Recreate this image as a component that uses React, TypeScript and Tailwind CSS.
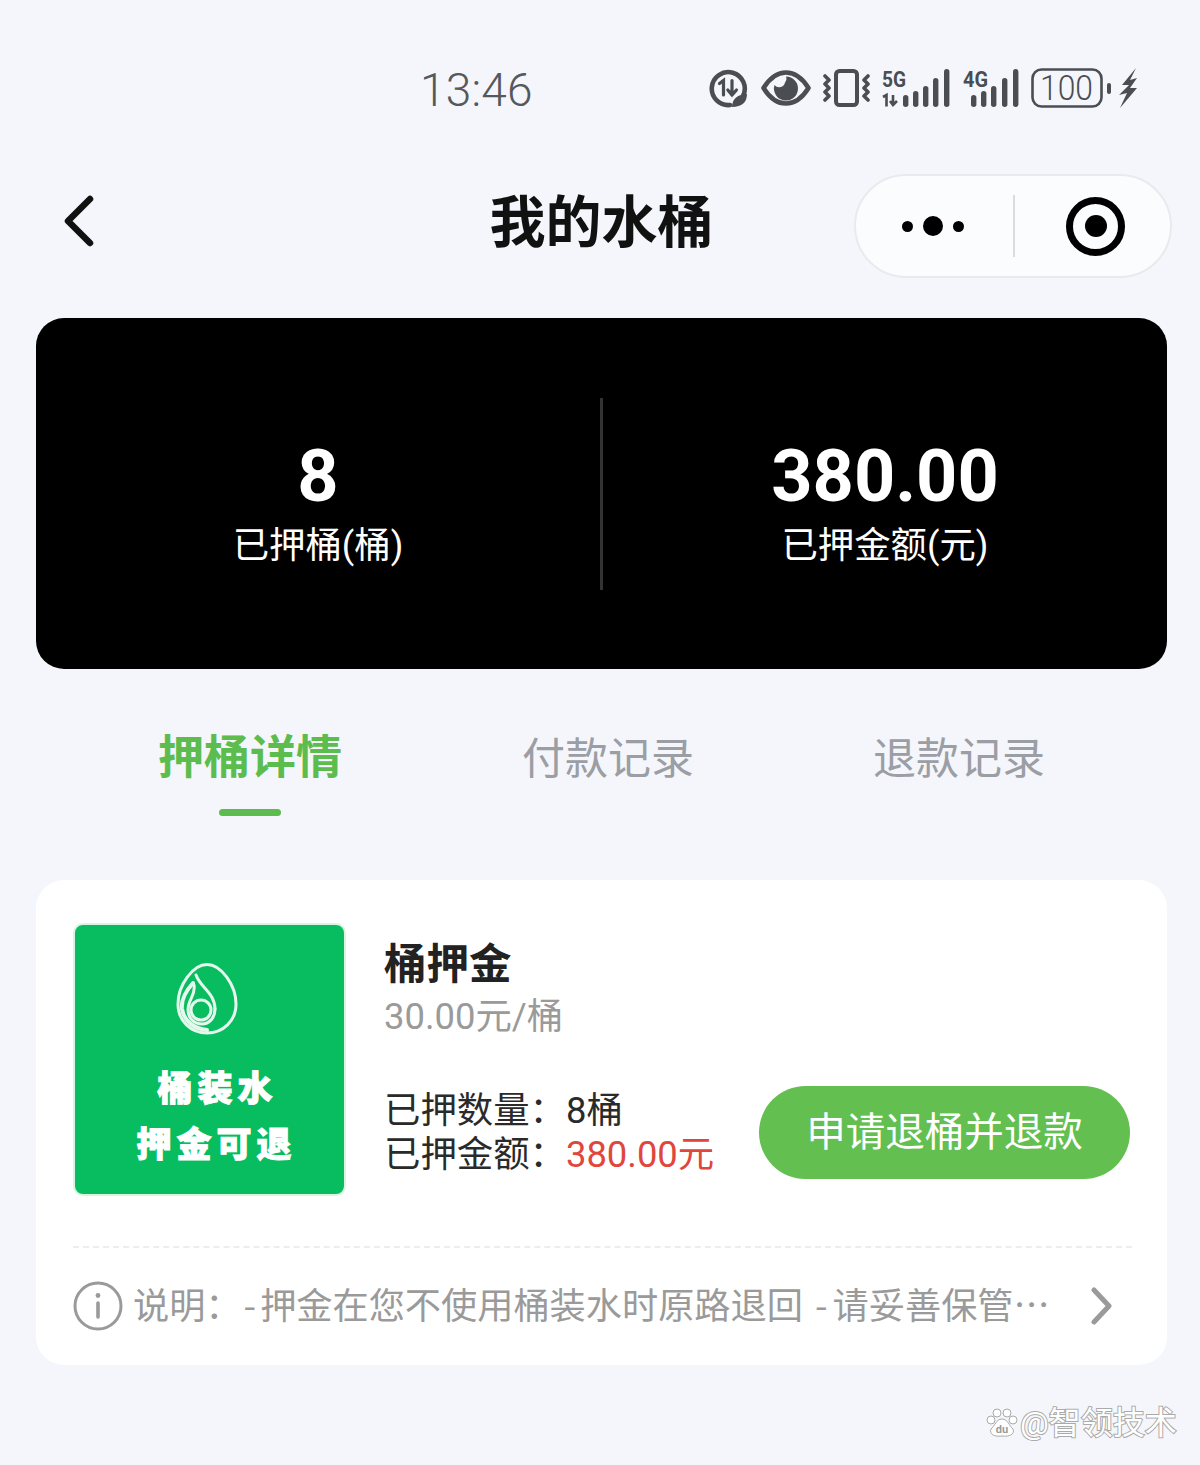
const CJK = "font-['Roboto','Noto_Sans_CJK_SC',sans-serif]";

function DataSaverIcon() {
  return (
    <svg width="39" height="39" viewBox="0 0 39 39" fill="none" stroke="#4a4d52" strokeLinecap="round">
      <path d="M34 27 A 16.5 16.5 0 1 0 21 36" strokeWidth="4.6" />
      <path d="M10.5 14.5 L14.5 11.5 V26" strokeWidth="3.2" />
      <path d="M23 11.5 V26 M18.8 21 L23 26 L27.5 21" strokeWidth="3.2" />
      <path d="M23 38 C 23 30 29 25 38 25 C 38 33 33 38 23 38 Z" fill="#4a4d52" stroke="none" />
    </svg>
  );
}

function EyeIcon() {
  return (
    <svg width="50" height="36" viewBox="0 0 50 36" fill="none">
      <path d="M2.5 18 C 10 6 18 2.5 25 2.5 C 32 2.5 40 6 47.5 18 C 40 30 32 33.5 25 33.5 C 18 33.5 10 30 2.5 18 Z" stroke="#4a4d52" strokeWidth="4.6" strokeLinejoin="round" />
      <path d="M25 6.5 A 12 12 0 1 1 13.5 15 A 6 6 0 0 0 24 12.5 A 6 6 0 0 0 25 6.5 Z" fill="#4a4d52" />
    </svg>
  );
}

function VibrateIcon() {
  return (
    <svg width="47" height="38" viewBox="0 0 47 38" fill="none" stroke="#4a4d52" strokeLinecap="round" strokeLinejoin="round">
      <rect x="13" y="2" width="21" height="34" rx="3.5" strokeWidth="4" />
      <path d="M2 7 L6 11 L2 15 L6 19 L2 23 L6 27 L2 31" strokeWidth="3.6" />
      <path d="M45 7 L41 11 L45 15 L41 19 L45 23 L41 27 L45 31" strokeWidth="3.6" />
    </svg>
  );
}

function Bars({ bars }: { bars: { x: number; top: number }[] }) {
  return (
    <>
      {bars.map((b) => (
        <rect key={b.x} x={b.x} y={b.top} width="5.4" height={38 - b.top} rx="2.7" fill="#4a4d52" />
      ))}
    </>
  );
}

function Signal5G() {
  return (
    <svg width="69" height="46" viewBox="0 -4 69 46">
      <text x="0" y="18" fontFamily="Roboto" fontWeight="700" fontSize="22" fill="#4a4d52" textLength="24" lengthAdjust="spacingAndGlyphs">5G</text>
      <path d="M1 28 L4.5 26 V37.5 M11 26 V36 M8 32 L11 36 L15 32" stroke="#4a4d52" strokeWidth="2.6" fill="none" />
      <Bars
        bars={[
          { x: 21, top: 26 },
          { x: 31, top: 22 },
          { x: 41, top: 17 },
          { x: 51, top: 9 },
          { x: 62, top: 0 },
        ]}
      />
    </svg>
  );
}

function Signal4G() {
  return (
    <svg width="56" height="46" viewBox="0 -4 56 46">
      <text x="0" y="18" fontFamily="Roboto" fontWeight="700" fontSize="22" fill="#4a4d52" textLength="25" lengthAdjust="spacingAndGlyphs">4G</text>
      <Bars
        bars={[
          { x: 8, top: 26 },
          { x: 18, top: 22 },
          { x: 28, top: 17 },
          { x: 39, top: 9 },
          { x: 50, top: 0 },
        ]}
      />
    </svg>
  );
}

function BatteryIcon() {
  return (
    <svg width="81" height="40" viewBox="0 0 81 40" fill="none">
      <rect x="1.5" y="1.5" width="69" height="37" rx="9" stroke="#4a4d52" strokeWidth="2.6" />
      <text x="9" y="32" fontFamily="Roboto" fontWeight="300" fontSize="35" fill="#4a4d52" textLength="53" lengthAdjust="spacingAndGlyphs">100</text>
      <rect x="76" y="15" width="4" height="11" rx="2" fill="#4a4d52" />
    </svg>
  );
}

function BoltIcon() {
  return (
    <svg width="19" height="40" viewBox="0 0 19 40">
      <path d="M17 0 L3 17 L10 17 L0 27 L8 25 L1 40 L18 20 L11 20 L18 10 L11 12 Z" fill="#4a4d52" />
    </svg>
  );
}

function DropLogo() {
  return (
    <svg width="62" height="72" viewBox="0 0 62 72" fill="none" stroke="#e6f8ee" strokeLinecap="round" strokeLinejoin="round">
      <path d="M31 1.5 C 45 1.5 60 22 60 41 C 60 58 47 70 31 70 C 15 70 2 58 2 41 C 2 22 17 1.5 31 1.5 Z" strokeWidth="3" />
      <path d="M20 12 C 24 24 39 30 39 46" strokeWidth="3" />
      <path d="M17 20 C 8 30 5 38 6 46 C 8 58 18 66 31 67" strokeWidth="4" />
      <path d="M18 22 C 20 32 12 36 12 47 C 12 55 18 61 26 61 C 33 61 39 55 39 46" strokeWidth="3" />
      <circle cx="25" cy="47" r="10" strokeWidth="3" />
    </svg>
  );
}

function PawIcon() {
  return (
    <svg width="32" height="30" viewBox="0 0 32 30" fill="#fff" stroke="#aaa" strokeWidth="1">
      <circle cx="5" cy="12" r="4" />
      <circle cx="11" cy="5" r="4" />
      <circle cx="21" cy="5" r="4" />
      <circle cx="27" cy="12" r="4" />
      <path d="M16 11 C 22 11 23 18 27 21 C 29 26 24 29 16 28 C 8 29 3 26 5 21 C 9 18 10 11 16 11 Z" />
      <text x="16" y="25" textAnchor="middle" fontFamily="Roboto" fontWeight="700" fontSize="11" fill="#999" stroke="none">du</text>
    </svg>
  );
}

function StatusBar() {
  return (
    <div className="flex items-center h-[64px] mt-[58px] mb-[52px] pl-[420px] text-[#55585d]">
      <span className="text-[46px] font-light leading-none w-[289px] tracking-[0.2px]">13:46</span>
      <div className="flex items-center pb-[4px]">
        <DataSaverIcon />
        <div className="ml-[13px]"><EyeIcon /></div>
        <div className="ml-[12px]"><VibrateIcon /></div>
        <div className="ml-[12px]"><Signal5G /></div>
        <div className="ml-[12px]"><Signal4G /></div>
        <div className="ml-[12px]"><BatteryIcon /></div>
        <div className="ml-[7px]"><BoltIcon /></div>
      </div>
    </div>
  );
}

function NavBar() {
  return (
    <div className="grid grid-cols-[1fr_auto_1fr] items-center h-[104px]">
      <div className="pl-[63px] pb-[10px]">
        <svg width="32" height="52" viewBox="0 0 32 52" fill="none" stroke="#111" strokeWidth="6.5" strokeLinecap="round" strokeLinejoin="round">
          <path d="M27 4 L5 26 L27 48" />
        </svg>
      </div>
      <h1 className="text-[56px] font-bold leading-none text-[#111] pb-[6px] pl-[3px]">我的水桶</h1>
      <div className="flex justify-end pr-[28px]">
        <div className="flex items-center w-[318px] h-[104px] rounded-full bg-[#fbfcfe] border-2 border-[#e9eaee]">
          <div className="flex w-[157px] items-center justify-center gap-[10px] pr-[3px]">
            <span className="w-[11px] h-[11px] rounded-full bg-black" />
            <span className="w-[20px] h-[20px] rounded-full bg-black" />
            <span className="w-[11px] h-[11px] rounded-full bg-black" />
          </div>
          <div className="w-[2px] h-[62px] bg-[#dcdcdf]" />
          <div className="flex w-[155px] items-center justify-center pl-[6px]">
            <div className="flex items-center justify-center w-[59px] h-[59px] rounded-full border-[7px] border-black">
              <span className="w-[22px] h-[22px] rounded-full bg-black" />
            </div>
          </div>
        </div>
      </div>
    </div>
  );
}

function Stat({ value, label }: { value: string; label: string }) {
  return (
    <div className="flex flex-1 flex-col items-center pt-[18px] text-white">
      <span className="text-[72px] font-bold leading-[84px]">{value}</span>
      <span className="text-[36.4px] leading-[50px] mt-[2px]">{label}</span>
    </div>
  );
}

function Summary() {
  return (
    <div className="flex items-center mx-[36px] mt-[40px] w-[1131px] h-[351px] rounded-[28px] bg-black">
      <Stat value="8" label="已押桶(桶)" />
      <div className="w-[3px] h-[192px] bg-[#333]" />
      <Stat value="380.00" label="已押金额(元)" />
    </div>
  );
}

function Tabs() {
  return (
    <div className="flex pl-[70px] pt-[60px] h-[211px]">
      <div className="flex flex-col items-center w-[360px]">
        <span className="text-[46px] font-bold leading-[56px] text-[#5cbd4e]">押桶详情</span>
        <span className="w-[62px] h-[7px] mt-[24px] rounded-full bg-[#5cbd4e]" />
      </div>
      <span className="w-[356px] text-center text-[43px] leading-[56px] pt-[2px] text-[#9b9ea4]">付款记录</span>
      <span className="w-[346px] text-center text-[43px] leading-[56px] pt-[2px] text-[#9b9ea4]">退款记录</span>
    </div>
  );
}

function DepositCard() {
  return (
    <div className="mx-[36px] w-[1131px] h-[485px] rounded-[28px] bg-white pt-[43px] pl-[37px] pr-[35px]">
      <div className="flex h-[273px]">
        <div className="flex flex-col items-center w-[273px] h-[273px] rounded-[10px] border-2 border-[#d9f4e3] bg-[#07bd5f] text-white shrink-0">
          <div className="mt-[38px] mr-[6px]"><DropLogo /></div>
          <span className="mt-[31px] text-[35px] font-black leading-[48px] tracking-[5px] pl-[16px] [-webkit-text-stroke:1px_#fff]">桶装水</span>
          <span className="mt-[8px] text-[35px] font-black leading-[48px] tracking-[5px] pl-[14px] [-webkit-text-stroke:1px_#fff]">押金可退</span>
        </div>
        <div className="flex flex-col ml-[38px] flex-1 pr-[2px]">
          <span className="text-[42.5px] font-bold leading-[50px] mt-[17px] text-[#222]">桶押金</span>
          <span className="text-[36.4px] leading-[50px] mt-[2px] text-[#9a9a9a]">30.00元/桶</span>
          <div className="flex items-center justify-between mt-[44px]">
            <div className="text-[36.4px] leading-[44px] text-[#2a2a2a]">
              <div>已押数量：8桶</div>
              <div>已押金额：<span className="text-[#e0463c]">380.00元</span></div>
            </div>
            <button className="w-[371px] h-[93px] rounded-full bg-[#62bf50] text-[39.5px] text-white">申请退桶并退款</button>
          </div>
        </div>
      </div>
      <div className="mt-[50px] border-t-2 border-dashed border-[#ededed]" />
      <div className="flex items-center mt-[33px] h-[50px]">
        <svg width="50" height="50" viewBox="0 0 50 50" fill="none" stroke="#9a9a9a" className="shrink-0">
          <circle cx="25" cy="25" r="23" strokeWidth="3" />
          <circle cx="25" cy="14.5" r="2.4" fill="#9a9a9a" stroke="none" />
          <path d="M25 22 V36" strokeWidth="3.6" strokeLinecap="round" />
        </svg>
        <span className="ml-[10px] w-[918px] pb-[6px] text-[36.2px] leading-[50px] text-[#9a9a9a] whitespace-nowrap font-['Noto_Sans_CJK_SC',sans-serif]">说明：<span className="ml-[2px] mr-[4px]">-</span>押金在您不使用桶装水时原路退回<span className="ml-[4px] mr-[5px]"> -</span>请妥善保管…</span>
        <svg width="22" height="38" viewBox="0 0 22 38" fill="none" stroke="#9a9a9a" strokeWidth="5" strokeLinecap="round" strokeLinejoin="round" className="ml-[40px] shrink-0">
          <path d="M3 3 L18 19 L3 35" />
        </svg>
      </div>
    </div>
  );
}

export default function App() {
  return (
    <div className={`relative w-[1200px] h-[1465px] overflow-hidden bg-[#f4f6fb] ${CJK}`}>
      <StatusBar />
      <NavBar />
      <Summary />
      <Tabs />
      <DepositCard />
      <div className="absolute left-[986px] top-[1405px] flex items-center">
        <PawIcon />
        <span className="ml-[2px] text-[32px] leading-[36px] text-white [-webkit-text-stroke:2px_#aaa] [paint-order:stroke_fill]">@智领技术</span>
      </div>
    </div>
  );
}
